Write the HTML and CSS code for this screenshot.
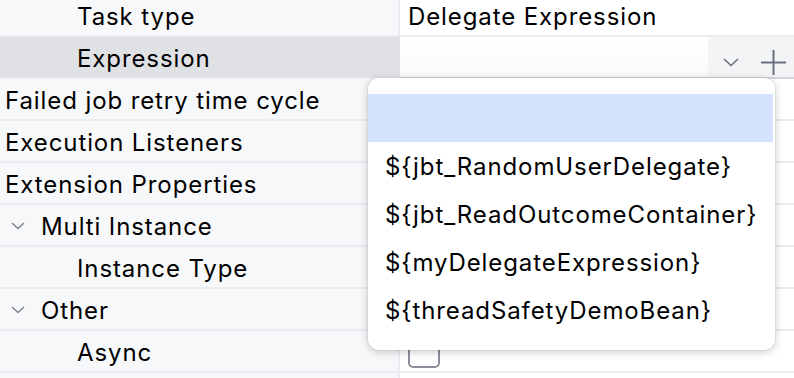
FILE: index.html
```html
<!DOCTYPE html>
<html lang="en">
  <head>
    <meta charset="UTF-8" />
    <title>Properties</title>
    <link rel="stylesheet" href="styles.css">
  </head>
  <body>
    <div class="sheet">
      <div class="row">
        <div class="name indent">Task type</div>
        <div class="value">Delegate Expression</div>
      </div>
      <div class="row selected">
        <div class="name indent">Expression</div>
        <div class="value combo">
          <div class="combo-field"></div>
          <div class="combo-tools">
            <svg class="chev" width="16" height="9" viewBox="0 0 16 9">
              <path d="M1 1 L8 7.5 L15 1" fill="none" stroke="#6c707e" stroke-width="1.6" />
            </svg>
            <svg class="plus" width="27" height="27" viewBox="0 0 27 27">
              <path d="M13.5 1 V26 M1 13.5 H26" fill="none" stroke="#6c707e" stroke-width="2" />
            </svg>
          </div>
        </div>
      </div>
      <div class="row">
        <div class="name">Failed job retry time cycle</div>
        <div class="value"></div>
      </div>
      <div class="row">
        <div class="name">Execution Listeners</div>
        <div class="value"></div>
      </div>
      <div class="row">
        <div class="name">Extension Properties</div>
        <div class="value"></div>
      </div>
      <div class="row">
        <div class="name group">
          <svg class="tree-chev" width="14" height="8" viewBox="0 0 14 8">
            <path d="M1 1 L7 6.5 L13 1" fill="none" stroke="#7f8391" stroke-width="1.5" />
          </svg>
          Multi Instance
        </div>
        <div class="value"></div>
      </div>
      <div class="row">
        <div class="name indent">Instance Type</div>
        <div class="value"></div>
      </div>
      <div class="row">
        <div class="name group">
          <svg class="tree-chev" width="14" height="8" viewBox="0 0 14 8">
            <path d="M1 1 L7 6.5 L13 1" fill="none" stroke="#7f8391" stroke-width="1.5" />
          </svg>
          Other
        </div>
        <div class="value"></div>
      </div>
      <div class="row">
        <div class="name indent">Async</div>
        <div class="value"><span class="checkbox"></span></div>
      </div>
      <div class="row tail">
        <div class="name"></div>
        <div class="value"></div>
      </div>
    </div>

    <div class="popup">
      <div class="item current"></div>
      <div class="item">${jbt_RandomUserDelegate}</div>
      <div class="item">${jbt_ReadOutcomeContainer}</div>
      <div class="item">${myDelegateExpression}</div>
      <div class="item">${threadSafetyDemoBean}</div>
    </div>
  </body>
</html>
```

FILE: styles.css
```css
html,
body {
  margin: 0;
  height: 100%;
  overflow: hidden;
  background-color: #ffffff;
  font-family: Inter, "Noto Sans", sans-serif;
  font-size: 24px;
  letter-spacing: 0.9px;
  color: #000000;
}

.sheet {
  margin-top: -5px;
}

.row {
  display: grid;
  grid-template-columns: 400px 1fr;
  height: 42px;
}

.row.tail {
  height: 5px;
}

.name {
  display: flex;
  align-items: center;
  padding: 2px 0 0 5px;
  background-color: #f7f8fa;
  border-bottom: 2px solid #ebecf0;
  border-right: 2px solid #ebecf0;
  white-space: nowrap;
}

.tail .name,
.tail .value {
  border-bottom: none;
}

.name.indent {
  padding-left: 77px;
}

.name.group {
  padding-left: 11px;
}

.tree-chev {
  margin: 0 16px 0 0;
}

.value {
  display: flex;
  align-items: center;
  padding: 2px 0 0 8px;
  background-color: #ffffff;
  border-bottom: 2px solid #ebecf0;
  white-space: nowrap;
}

.selected .name {
  background-color: #dfe1e5;
  border-right-color: #dfe1e5;
}

.combo {
  padding: 0;
  align-items: stretch;
  border-bottom-color: #d3d5da;
}

.combo-field {
  flex: 1;
  background: linear-gradient(#ffffff, #f9f9fa);
}

.combo-tools {
  width: 86px;
  display: flex;
  align-items: flex-end;
  background-color: #f3f4f6;
}

.chev {
  margin: 0 0 10px 15px;
}

.plus {
  margin: 0 0 1px 21px;
}

.checkbox {
  display: inline-block;
  width: 28px;
  height: 28px;
  border: 2px solid #8a8e9a;
  border-radius: 5px;
  background-color: #ffffff;
}

.popup {
  position: absolute;
  left: 368px;
  top: 78px;
  width: 407px;
  padding: 16px 0;
  background-color: #ffffff;
  border-radius: 11px;
  box-shadow: 0 2px 10px rgba(0, 0, 0, 0.2), 0 0 0 1px rgba(0, 0, 0, 0.05);
}

.item {
  height: 48px;
  display: flex;
  align-items: center;
  padding: 1px 0 0 17px;
  margin-right: 2px;
  box-sizing: border-box;
}

.item.current {
  background-color: #d4e2fd;
}
```
